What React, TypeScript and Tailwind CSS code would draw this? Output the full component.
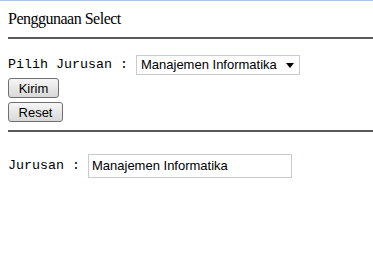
export default function App() {
  return (
    <div className="min-h-[258px] w-[373px] border-t border-[#a9c6e8] bg-white pl-2 text-black">
      <p className="pt-[8px] font-['Liberation_Serif',serif] text-[16px] leading-[19px] tracking-[-0.5px]">Penggunaan Select</p>
      <hr className="mt-[9px] border-t-2 border-b-0 border-[#5a5a5a]" />
      <form className="mt-[16px] font-['Liberation_Mono',monospace] text-[13.33px]">
        <div className="flex items-center gap-2">
          <span>Pilih Jurusan :</span>
          <div className="flex h-[20px] w-[164px] items-center justify-between border border-[#c5cbd3] bg-white pl-[4px] pr-[5px] font-['Liberation_Sans',sans-serif] text-[13px]">
            <span>Manajemen Informatika</span>
            <svg width="8" height="5" viewBox="0 0 8 5">
              <path d="M0 0h8L4 5z" fill="#000" />
            </svg>
          </div>
        </div>
        <div className="mt-[3px] flex flex-col items-start gap-[4px] font-['Liberation_Sans',sans-serif] text-[13px]">
          <button type="button" className="h-[20px] w-[51px] rounded-[3px] border border-[#707070] bg-gradient-to-b from-[#f6f6f6] to-[#d8d8d8]">Kirim</button>
          <button type="button" className="h-[20px] w-[55px] rounded-[3px] border border-[#707070] bg-gradient-to-b from-[#f6f6f6] to-[#d8d8d8]">Reset</button>
        </div>
      </form>
      <hr className="mt-[8px] border-t-2 border-b-0 border-[#5a5a5a]" />
      <div className="mt-[22px] flex items-center gap-2 font-['Liberation_Mono',monospace] text-[13.33px]">
        <span>Jurusan :</span>
        <div className="flex h-[24px] w-[204px] items-center border border-[#c5cbd3] pl-[3px] font-['Liberation_Sans',sans-serif] text-[13px]">Manajemen Informatika</div>
      </div>
    </div>
  );
}
